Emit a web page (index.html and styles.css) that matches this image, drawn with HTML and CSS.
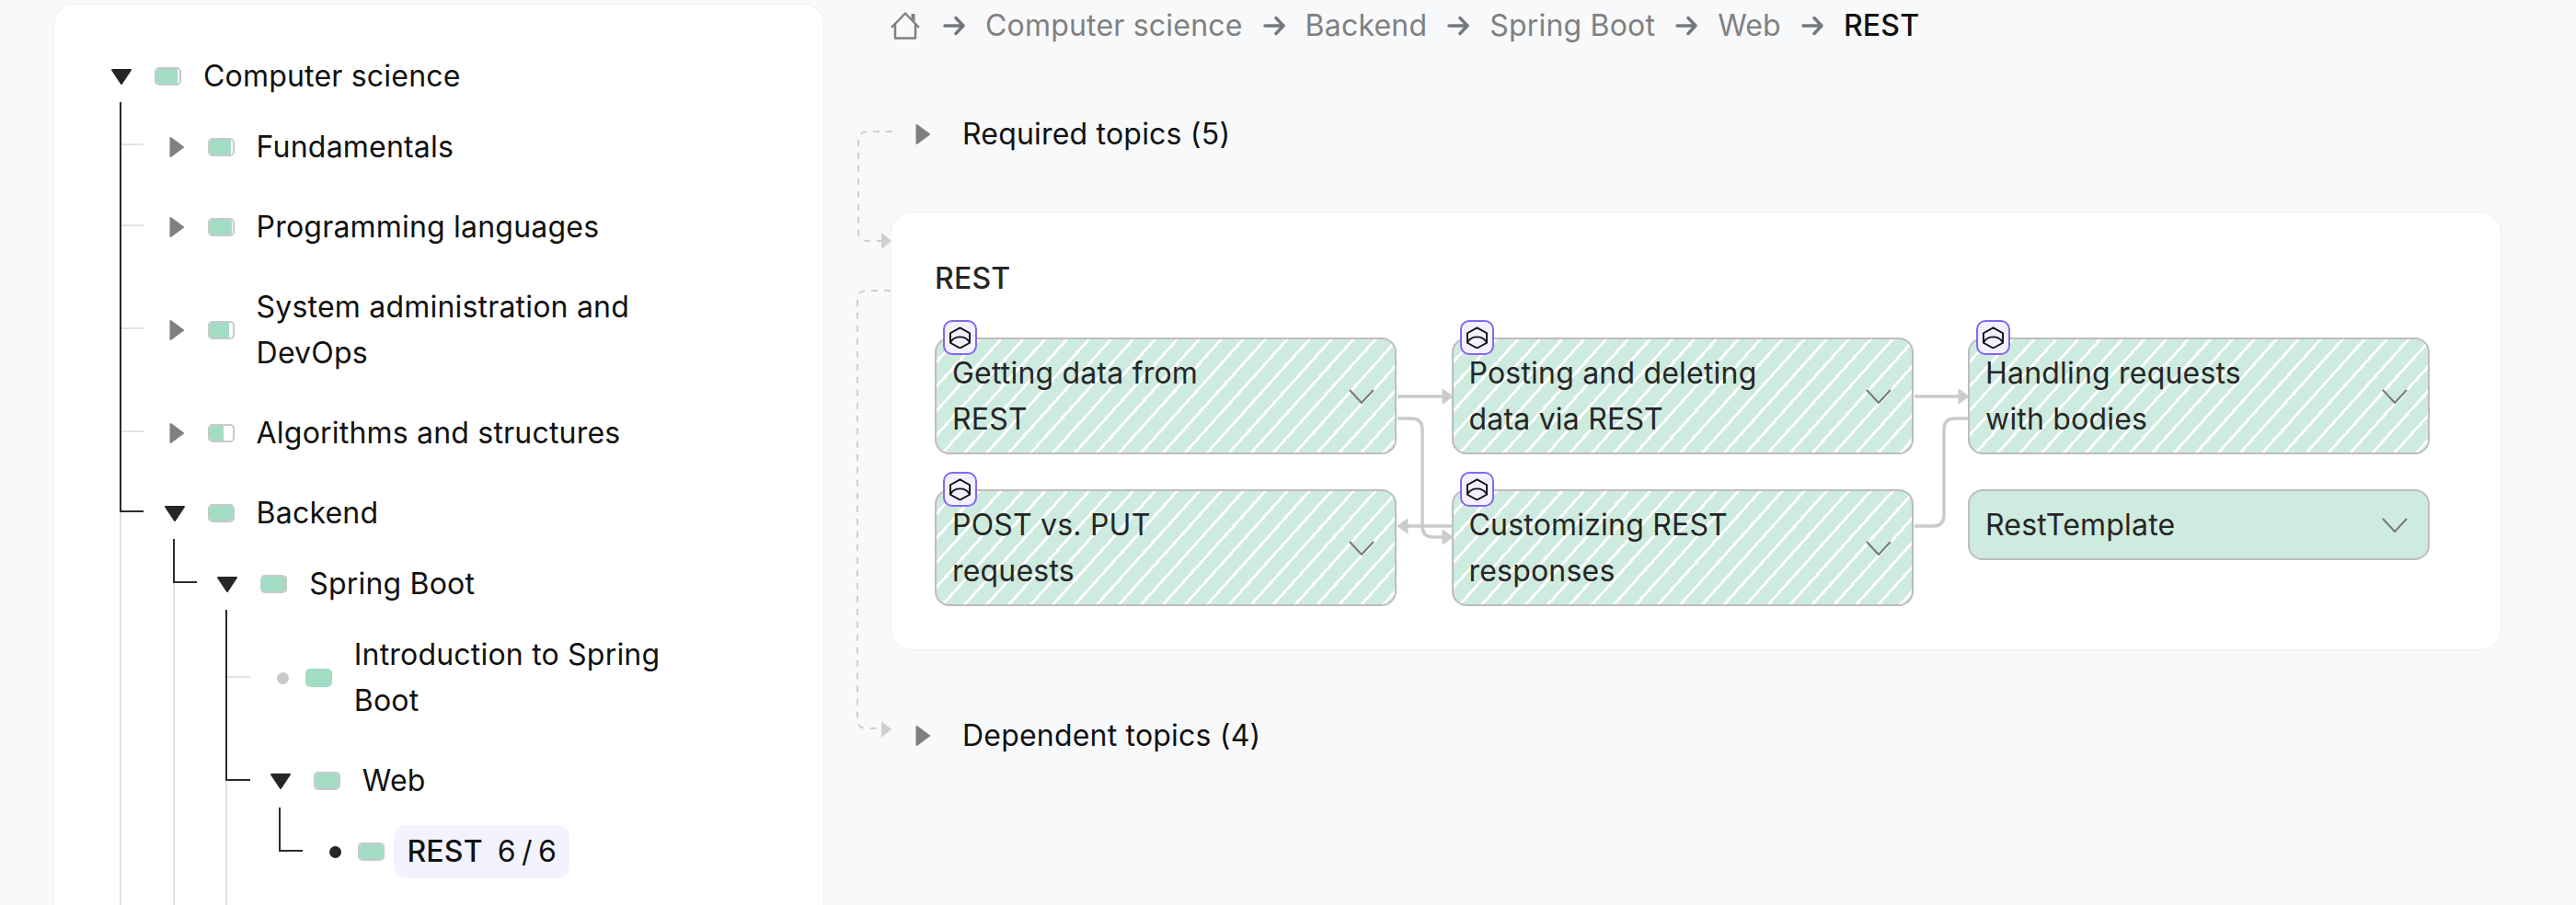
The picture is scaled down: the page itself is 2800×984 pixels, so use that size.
FILE: index.html

```html
<!DOCTYPE html>
<html>
<head>
<meta charset="utf-8">
<title>REST</title>
<link rel="stylesheet" href="styles.css">
</head>
<body>

<svg class="wires" width="2800" height="984" viewBox="0 0 2800 984">
  <!-- tree guides -->
  <g class="guide-light">
    <path d="M131 556V984M189 633V984M246 848V984"/>
    <path d="M132 157H156M132 245H156M132 357H156M132 469H156M247 736H272"/>
  </g>
  <g class="guide-dark">
    <path d="M131 111V556H156"/>
    <path d="M189 586V633H214"/>
    <path d="M246 663V848H272"/>
    <path d="M304 878V925H329"/>
  </g>
  <!-- prerequisites -->
  <g class="link-dash">
    <path d="M970 143H943Q933 143 933 153V252Q933 262 943 262H960"/>
    <path d="M968 316H942Q932 316 932 326V782Q932 792 942 792H960"/>
  </g>
  <path class="arrow-dash" d="M958 253L969 262L958 271Z"/>
  <path class="arrow-dash" d="M958 784L969 793L958 802Z"/>
  <!-- topic graph -->
  <g class="link">
    <path d="M1519 431H1570"/>
    <path d="M1519 455H1534Q1546 455 1546 467V572Q1546 584 1558 584H1570"/>
    <path d="M1579 572H1528"/>
    <path d="M2081 431H2130"/>
    <path d="M2081 572H2101Q2113 572 2113 560V467Q2113 455 2125 455H2140"/>
  </g>
  <path class="arrow" d="M1568 423L1579 431L1568 439Z"/>
  <path class="arrow" d="M1568 576L1579 584L1568 592Z"/>
  <path class="arrow" d="M1530 564L1519 572L1530 580Z"/>
  <path class="arrow" d="M2129 423L2140 431L2129 439Z"/>
</svg>

<aside class="sidebar">
  <ul class="tree tree-root">
    <li>
      <div class="row">
        <svg class="caret" viewBox="0 0 24 24"><path class="caret-down" d="M2 5H22L12 20Z"/></svg>
        <span class="progress"><i style="width:92%"></i></span>
        <span class="row-name">Computer science</span>
      </div>
      <ul class="tree">
        <li>
          <div class="row">
            <svg class="caret" viewBox="0 0 24 24"><path class="caret-right" d="M7.5 2L21 12L7.5 22Z"/></svg>
            <span class="progress"><i style="width:92%"></i></span>
            <span class="row-name">Fundamentals</span>
          </div>
        </li>
        <li>
          <div class="row">
            <svg class="caret" viewBox="0 0 24 24"><path class="caret-right" d="M7.5 2L21 12L7.5 22Z"/></svg>
            <span class="progress"><i style="width:96%"></i></span>
            <span class="row-name">Programming languages</span>
          </div>
        </li>
        <li>
          <div class="row">
            <svg class="caret" viewBox="0 0 24 24"><path class="caret-right" d="M7.5 2L21 12L7.5 22Z"/></svg>
            <span class="progress"><i style="width:86%"></i></span>
            <span class="row-name">System administration and DevOps</span>
          </div>
        </li>
        <li>
          <div class="row">
            <svg class="caret" viewBox="0 0 24 24"><path class="caret-right" d="M7.5 2L21 12L7.5 22Z"/></svg>
            <span class="progress"><i style="width:62%"></i></span>
            <span class="row-name">Algorithms and structures</span>
          </div>
        </li>
        <li>
          <div class="row">
            <svg class="caret" viewBox="0 0 24 24"><path class="caret-down" d="M2 5H22L12 20Z"/></svg>
            <span class="progress"><i style="width:100%"></i></span>
            <span class="row-name">Backend</span>
          </div>
          <ul class="tree">
            <li>
              <div class="row">
                <svg class="caret" viewBox="0 0 24 24"><path class="caret-down" d="M2 5H22L12 20Z"/></svg>
                <span class="progress"><i style="width:100%"></i></span>
                <span class="row-name">Spring Boot</span>
              </div>
              <ul class="tree">
                <li>
                  <div class="row row-leaf">
                    <span class="dot"></span>
                    <span class="progress progress-plain"><i style="width:100%"></i></span>
                    <span class="row-name row-name-short">Introduction to Spring Boot</span>
                  </div>
                </li>
                <li>
                  <div class="row">
                    <svg class="caret" viewBox="0 0 24 24"><path class="caret-down" d="M2 5H22L12 20Z"/></svg>
                    <span class="progress"><i style="width:100%"></i></span>
                    <span class="row-name">Web</span>
                  </div>
                  <ul class="tree">
                    <li>
                      <div class="row row-leaf">
                        <span class="dot dot-active"></span>
                        <span class="progress"><i style="width:100%"></i></span>
                        <span class="current"><b>REST</b><span class="current-count">6 / 6</span></span>
                      </div>
                    </li>
                  </ul>
                </li>
              </ul>
            </li>
          </ul>
        </li>
      </ul>
    </li>
  </ul>
</aside>

<main class="content">
  <nav class="crumbs">
    <svg class="home" viewBox="0 0 32 30"><path d="M1 17L16 1.500L31 17M5 13V28.500H27V13"/><path class="home-chimney" d="M22.500 2H26.500V11L22.500 7Z"/></svg>
    <svg class="crumb-arrow" viewBox="0 0 24 24"><path d="M2 12H22M14 3.500L22 12L14 20.500"/></svg>
    <a>Computer science</a>
    <svg class="crumb-arrow" viewBox="0 0 24 24"><path d="M2 12H22M14 3.500L22 12L14 20.500"/></svg>
    <a>Backend</a>
    <svg class="crumb-arrow" viewBox="0 0 24 24"><path d="M2 12H22M14 3.500L22 12L14 20.500"/></svg>
    <a>Spring Boot</a>
    <svg class="crumb-arrow" viewBox="0 0 24 24"><path d="M2 12H22M14 3.500L22 12L14 20.500"/></svg>
    <a>Web</a>
    <svg class="crumb-arrow" viewBox="0 0 24 24"><path d="M2 12H22M14 3.500L22 12L14 20.500"/></svg>
    <a class="crumb-now">REST</a>
  </nav>

  <div class="fold fold-required">
    <svg class="caret" viewBox="0 0 24 24"><path class="caret-right" d="M7.5 2L21 12L7.5 22Z"/></svg>
    <span>Required topics (5)</span>
  </div>

  <section class="card">
    <h2>REST</h2>
    <div class="graph">
      <div class="node node-hatch">
        <span class="badge"><svg viewBox="0 0 24 24"><path d="M12 1L23 7V18L12 24L1 18V7ZM1.500 17C6 9.500 18 9.500 22.500 17"/></svg></span>
        <span class="node-name">Getting data from REST</span>
        <svg class="chevron" viewBox="0 0 28 16"><path d="M1 1L14 15L27 1"/></svg>
      </div>
      <div class="node node-hatch">
        <span class="badge"><svg viewBox="0 0 24 24"><path d="M12 1L23 7V18L12 24L1 18V7ZM1.500 17C6 9.500 18 9.500 22.500 17"/></svg></span>
        <span class="node-name">Posting and deleting data via REST</span>
        <svg class="chevron" viewBox="0 0 28 16"><path d="M1 1L14 15L27 1"/></svg>
      </div>
      <div class="node node-hatch">
        <span class="badge"><svg viewBox="0 0 24 24"><path d="M12 1L23 7V18L12 24L1 18V7ZM1.500 17C6 9.500 18 9.500 22.500 17"/></svg></span>
        <span class="node-name">Handling requests with bodies</span>
        <svg class="chevron" viewBox="0 0 28 16"><path d="M1 1L14 15L27 1"/></svg>
      </div>
      <div class="node node-hatch">
        <span class="badge"><svg viewBox="0 0 24 24"><path d="M12 1L23 7V18L12 24L1 18V7ZM1.500 17C6 9.500 18 9.500 22.500 17"/></svg></span>
        <span class="node-name">POST vs. PUT requests</span>
        <svg class="chevron" viewBox="0 0 28 16"><path d="M1 1L14 15L27 1"/></svg>
      </div>
      <div class="node node-hatch">
        <span class="badge"><svg viewBox="0 0 24 24"><path d="M12 1L23 7V18L12 24L1 18V7ZM1.500 17C6 9.500 18 9.500 22.500 17"/></svg></span>
        <span class="node-name">Customizing REST responses</span>
        <svg class="chevron" viewBox="0 0 28 16"><path d="M1 1L14 15L27 1"/></svg>
      </div>
      <div class="node">
        <span class="node-name">RestTemplate</span>
        <svg class="chevron" viewBox="0 0 28 16"><path d="M1 1L14 15L27 1"/></svg>
      </div>
    </div>
  </section>

  <div class="fold fold-dependent">
    <svg class="caret" viewBox="0 0 24 24"><path class="caret-right" d="M7.5 2L21 12L7.5 22Z"/></svg>
    <span>Dependent topics (4)</span>
  </div>
</main>

</body>
</html>
```

FILE: styles.css

```css
html, body {
  margin: 0;
  height: 984px;
  overflow: hidden;
}

body {
  position: relative;
  display: flex;
  align-items: flex-start;
  background: #f8f9fb;
  color: #111;
  font-family: Inter, "Noto Sans", sans-serif;
  font-size: 32px;
  line-height: 50px;
  letter-spacing: 0.2px;
}

.wires {
  position: absolute;
  left: 0;
  top: 0;
  z-index: 2;
  pointer-events: none;
  fill: none;
}
.guide-light path { stroke: #e2e2e2; stroke-width: 2; }
.guide-dark path { stroke: #2b2b2b; stroke-width: 2; }
.link-dash path { stroke: #cfcfcf; stroke-width: 2; stroke-dasharray: 7 7; }
.arrow-dash { fill: #cfcfcf; }
.link path { stroke: #cbcbcb; stroke-width: 3.5; }
.arrow { fill: #cbcbcb; stroke: #cbcbcb; stroke-width: 1; stroke-linejoin: round; }

/* left tree */
.sidebar {
  box-sizing: border-box;
  flex: none;
  width: 838px;
  height: 980px;
  margin: 4px 0 0 58px;
  padding: 53px 0 0 61px;
  background: #fff;
  border: 1px solid #eef0f2;
  border-bottom: 0;
  border-radius: 22px 22px 0 0;
}

.tree {
  list-style: none;
  margin: 27px 0 0;
  padding: 0 0 0 57.6px;
}
.tree-root {
  margin: 0;
  padding: 0;
}
.tree > li + li {
  margin-top: 37px;
}

.row {
  display: flex;
  align-items: center;
}

.caret {
  flex: none;
  width: 24px;
  height: 24px;
}
.caret path {
  stroke-width: 2;
  stroke-linejoin: round;
}
.caret-down { fill: #262626; stroke: #262626; }
.caret-right { fill: #808080; stroke: #808080; }

.progress {
  flex: none;
  box-sizing: border-box;
  width: 29px;
  height: 20px;
  margin: 0 24px;
  background: #fff;
  border: 2px solid #c9c9c9;
  border-radius: 5px;
  overflow: hidden;
}
.progress i {
  display: block;
  height: 100%;
  background: #a2dcc4;
}
.progress-plain {
  border: 0;
}

.row-name {
  width: 480px;
}
.row-name-short {
  width: 360px;
}

.row-leaf .progress {
  margin: 0 10px 0 18px;
}
.row-leaf .row-name {
  margin-left: 14px;
}

.dot {
  flex: none;
  width: 13px;
  height: 13px;
  margin-left: 8px;
  background: #c9c9c9;
  border-radius: 50%;
}
.dot-active {
  background: #262626;
}

.current {
  display: flex;
  gap: 16px;
  height: 58px;
  margin: -4px 0;
  align-items: center;
  padding: 0 14px;
  background: #f2f3fe;
  border-radius: 14px;
}
.current b {
  font-weight: 500;
}
.current-count {
  word-spacing: -3px;
}

/* right side */
.content {
  flex: none;
  width: 1751px;
  margin-left: 72px;
}

.crumbs {
  display: flex;
  align-items: center;
  gap: 22px;
  height: 56px;
  color: #808080;
}
.crumb-now {
  color: #111;
  font-weight: 500;
}
.home {
  width: 32px;
  height: 30px;
  margin-right: 3px;
  fill: none;
  stroke: #808080;
  stroke-width: 2.5;
  stroke-linejoin: round;
}
.home-chimney {
  fill: #808080;
  stroke: none;
}
.crumb-arrow {
  width: 24px;
  height: 24px;
  fill: none;
  stroke: #74787d;
  stroke-width: 3.5;
  stroke-linecap: round;
  stroke-linejoin: round;
}

.fold {
  display: flex;
  align-items: center;
  gap: 33px;
  padding-left: 21px;
}
.fold-required {
  margin-top: 65px;
}
.fold-dependent {
  margin-top: 68px;
}

.card {
  box-sizing: border-box;
  height: 477px;
  margin-top: 59px;
  padding: 47px 76px 0 47px;
  background: #fff;
  border: 1px solid #eef0f2;
  border-radius: 22px;
}
.card h2 {
  margin: 0 0 39px;
  font-size: 32px;
  line-height: 50px;
  font-weight: 500;
  color: #262626;
}

.graph {
  display: grid;
  grid-template-columns: repeat(3, 502px);
  column-gap: 59.5px;
  row-gap: 38px;
  align-items: start;
}

.node {
  position: relative;
  box-sizing: border-box;
  display: flex;
  align-items: center;
  justify-content: space-between;
  padding: 12px 22px 11px 17px;
  background: #ceebdf;
  border: 2.5px solid #bdbdbd;
  border-radius: 16px;
  color: #262626;
}
.node-hatch {
  background: repeating-linear-gradient(132deg, #ceebdf 0 14.8px, #fff 14.8px 17.8px);
}
.node-name {
  width: 340px;
}
.chevron {
  flex: none;
  width: 28px;
  height: 16px;
  fill: none;
  stroke: #777;
  stroke-width: 2;
}

.badge {
  position: absolute;
  left: 7px;
  top: -21px;
  box-sizing: border-box;
  display: flex;
  align-items: center;
  justify-content: center;
  width: 37px;
  height: 38px;
  background: #f3f1ff;
  border: 2.5px solid #8566f2;
  border-radius: 10px;
}
.badge svg {
  width: 23px;
  height: 24px;
  fill: none;
  stroke: #111;
  stroke-width: 2;
}
```
